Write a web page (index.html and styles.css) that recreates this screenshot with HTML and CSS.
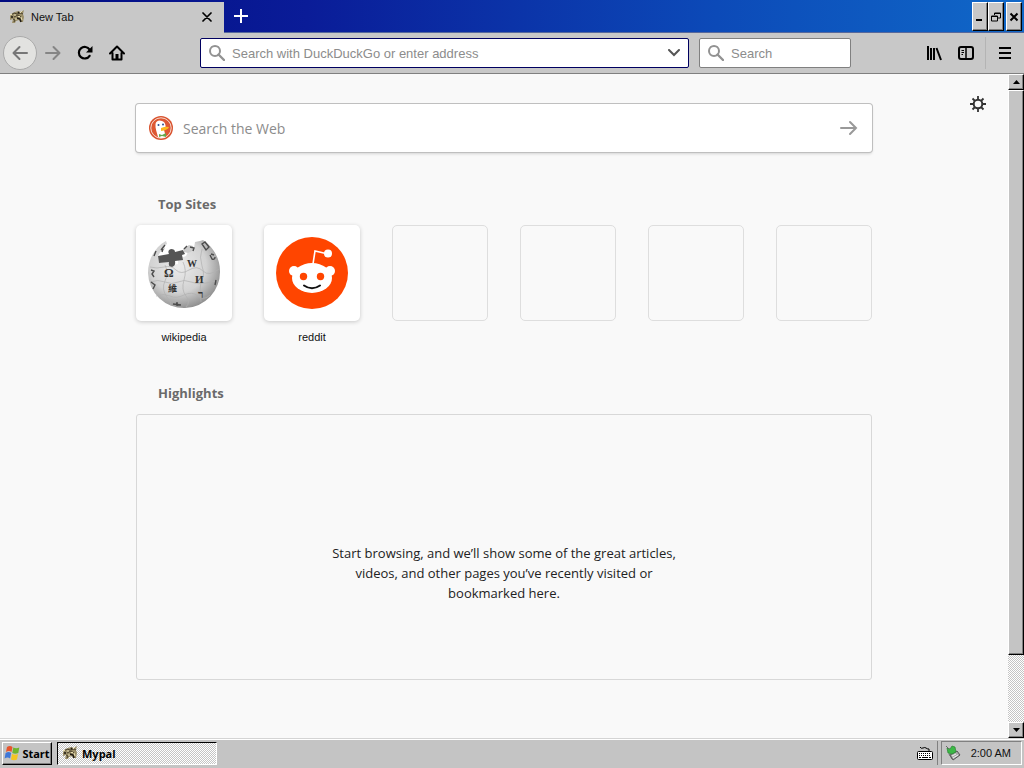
FILE: index.html
```html
<!DOCTYPE html>
<html lang="en">
<head>
    <meta charset="UTF-8">
    <meta name="viewport" content="width=device-width,initial-scale=1">
    <title>New Tab</title>
    <link rel="stylesheet" href="styles.css">
</head>
<body>
<svg class="defs" width="0" height="0" aria-hidden="true">
    <symbol id="mypal" viewBox="0 0 16 16">
        <path d="M1 7 3 4.500 6 3l3-1 3 1 3-2-1 4 1 3-1 5h-3l-1-2-3 1-1 2H3l1-4-3 1z" fill="#9a8e68"/>
        <path d="M2 6 5 4l3 1 4-1 2 1M5 8l4-2 3 2M4 10l2 1-1 2" fill="none" stroke="#4a412c" stroke-width="1"/>
        <path d="M8 9l3 1 1 3M2 8h2M9 3l1 1" fill="none" stroke="#1c1812" stroke-width="1.500"/>
        <path d="M1 5.500h2M5 6h2M11 4l2-2M9 7.500h2M6 10h2M12 8l1 3" stroke="#e6dcb0" stroke-width="1"/>
    </symbol>
    <symbol id="glass" viewBox="0 0 16 16">
        <circle cx="6" cy="6" r="5" fill="none" stroke="currentColor" stroke-width="2"/>
        <path d="M9.5 9.5 15 15" stroke="currentColor" stroke-width="2.4" stroke-linecap="round"/>
    </symbol>
    <symbol id="arrow" viewBox="0 0 16 16">
        <path d="M1 8h13M8.5 2l6 6-6 6" fill="none" stroke="currentColor" stroke-width="2" stroke-linecap="round" stroke-linejoin="round"/>
    </symbol>
</svg>

<header class="titlebar">
    <div class="tab">
        <svg class="icon16"><use href="#mypal"/></svg>
        <span class="tab-title">New Tab</span>
        <button class="tab-close" aria-label="Close tab">
            <svg width="10" height="10" viewBox="0 0 10 10"><path d="M1 1l8 8M9 1 1 9" stroke="#000" stroke-width="1.7" stroke-linecap="round"/></svg>
        </button>
    </div>
    <button class="new-tab" aria-label="New tab">
        <svg width="14" height="14" viewBox="0 0 14 14"><path d="M7 0v14M0 7h14" stroke="#fff" stroke-width="2"/></svg>
    </button>
    <div class="window-buttons">
        <button aria-label="Minimize"><svg width="10" height="10" viewBox="0 0 10 10"><path d="M1 8h6" stroke="#000" stroke-width="2"/></svg></button>
        <button aria-label="Restore"><svg width="10" height="10" viewBox="0 0 10 10"><path d="M3.5 3V1h6v5H7M3 1.5h7M.5 4h6v5h-6zM0 4.5h7" fill="none" stroke="#000"/></svg></button>
        <button class="close" aria-label="Close"><svg width="10" height="10" viewBox="0 0 10 10"><path d="M1.5 1.5l7 7M8.5 1.5l-7 7" stroke="#000" stroke-width="2"/></svg></button>
    </div>
</header>

<nav class="toolbar">
    <div class="nav-buttons">
        <button class="back" aria-label="Back"><svg class="icon16 flip"><use href="#arrow"/></svg></button>
        <button class="forward" aria-label="Forward"><svg class="icon16"><use href="#arrow"/></svg></button>
        <button aria-label="Reload">
            <svg class="icon16" viewBox="0 0 16 16"><path d="M12.6 10.8A5.8 5.8 0 1 1 12.6 4.6" fill="none" stroke="#000" stroke-width="2.2" stroke-linecap="round"/><path d="M15.5 1v6.5H9z"/></svg>
        </button>
        <button aria-label="Home">
            <svg class="icon16" viewBox="0 0 16 16"><path d="M1 8.5 8 1.5l7 7M3.5 8v6.5h9V8" fill="none" stroke="#000" stroke-width="2" stroke-linecap="round" stroke-linejoin="round"/><path d="M6.5 9h3v5.500h-3z"/></svg>
        </button>
    </div>
    <div class="field urlbar">
        <svg class="icon16"><use href="#glass"/></svg>
        <input type="text" aria-label="Address" placeholder="Search with DuckDuckGo or enter address">
        <button aria-label="Show history">
            <svg width="12" height="8" viewBox="0 0 12 8"><path d="M1 1l5 5 5-5" fill="none" stroke="#555" stroke-width="2" stroke-linecap="round"/></svg>
        </button>
    </div>
    <div class="field searchbar">
        <svg class="icon16"><use href="#glass"/></svg>
        <input type="text" aria-label="Search" placeholder="Search">
    </div>
    <div class="tool-buttons">
        <button aria-label="Library">
            <svg class="icon16" viewBox="0 0 16 16"><path d="M2 1v14M5 3v12M8 3v12M10.500 3l4.500 12" stroke="#000" stroke-width="2"/></svg>
        </button>
        <button aria-label="Sidebars">
            <svg class="icon16" viewBox="0 0 16 16"><rect x="1" y="2" width="14" height="12" rx="2" fill="none" stroke="#000" stroke-width="2"/><path d="M8 2v12" stroke="#000" stroke-width="1.500"/><path d="M3.500 5.500H6M3.500 7.500H6M3.500 9.500H5" stroke="#000"/></svg>
        </button>
        <button class="menu" aria-label="Open menu">
            <svg width="12" height="12" viewBox="0 0 12 12"><path d="M0 1h12M0 6h12M0 11h12" stroke="#000" stroke-width="2"/></svg>
        </button>
    </div>
</nav>

<div class="viewport">
    <main>
        <button class="settings" aria-label="Settings">
            <svg class="icon16" viewBox="0 0 16 16"><circle cx="8" cy="8" r="4.300" fill="none" stroke="#333" stroke-width="2"/><path d="M8 0v4M8 12v4M0 8h4M12 8h4M2.500 2.500 5 5M11 11l2.500 2.500M13.500 2.500 11 5M5 11l-2.500 2.500" stroke="#333" stroke-width="1.800"/></svg>
        </button>
        <div class="content">
            <form class="web-search">
                <svg width="24" height="24" viewBox="0 0 24 24">
                    <circle cx="12" cy="12" r="12" fill="#d9532f"/>
                    <circle cx="12" cy="12" r="10.200" fill="#de5833" stroke="#f6dcd2" stroke-width="1"/>
                    <path d="M9 21C8 17 6 12 6.500 8 7 5 10 3.500 13 5c3 1 4 4 3.500 7L15 14l2 7q-4 2-8 0z" fill="#fff"/>
                    <circle cx="9.500" cy="9" r="1" fill="#2d4f8e"/><circle cx="14" cy="8.500" r="1" fill="#2d4f8e"/>
                    <path d="M12 12q5-2 8-1-1 3-8 4z" fill="#fdb81e"/>
                    <path d="M10 18l3 1 4-2v4l-4-1-3 1z" fill="#65a94b"/>
                </svg>
                <input type="text" aria-label="Search the Web" placeholder="Search the Web">
                <button aria-label="Submit search"><svg width="18" height="16" viewBox="0 0 18 16"><path d="M1 8h15M10 2l6 6-6 6" fill="none" stroke="#999" stroke-width="2" stroke-linecap="round"/></svg></button>
            </form>

            <section>
                <h2>Top Sites</h2>
                <ul class="sites">
                    <li>
                        <a href="#">
                            <span class="tile">
                                <svg width="96" height="96" viewBox="0 0 96 96">
                                    <defs>
                                        <radialGradient id="globe" cx=".42" cy=".38" r=".65">
                                            <stop offset="0" stop-color="#ececec"/>
                                            <stop offset=".6" stop-color="#d2d2d2"/>
                                            <stop offset="1" stop-color="#8c8c8c"/>
                                        </radialGradient>
                                    </defs>
                                    <path d="M30 16l1 3-3 2 1 3-4 2-3 5 1 7 12-2 2 4 5-1 0-5 8-3 3-6 5-2 1-6 5-1 3-1 5 4C80 27 84 36 84 46a36 36 0 0 1-72 2C12 34 19 22 30 16z" fill="url(#globe)"/>
                                    <path d="M22 31l11-2q-2-4 2-5 4 0 4 3l8-2 2 4-3 1 1 5-8 1q1 5-3 6-4 0-3-5l-10 1z" fill="#555"/>
                                    <path d="M47 24l6-4 4 1 1 4-6 3-4-1z" fill="#ccc"/>
                                    <path d="M14 42q7 2 14 0t12 3 13 0 14 1 16-2M14 57q8-3 15 0t13 0 13 0 15 1 12-2M20 71q8-3 14 0t14-1 14 1 12-1M29 40q4 8 0 16t2 16 3 8M47 37q4 8 1 18t2 16 0 11M66 24q-3 8 0 17t0 14-1 22" fill="none" stroke="#b0b0b0" stroke-width=".7"/>
                                    <g class="globe-letters">
                                        <text x="28" y="52" font-size="12">Ω</text>
                                        <text x="51" y="42" font-size="10">W</text>
                                        <text x="59" y="58" font-size="11">И</text>
                                        <text x="32" y="67" font-size="9">維</text>
                                        <text x="62" y="73" font-size="11">ר</text>
                                    </g>
                                    <path d="M66 19l3-2 4 5-3 3zM74 30l2 4q3 1 3-2M75 29l3 1M48 24l3-3M54 22l4 1-1 3M18 31l2-5M25 25l4-5M26 27l1-3M15 45l3 1-2 3 2 3M15 57l4 3-2 4M37 79l8 1M41 77v4M80 55l-1 5" fill="none" stroke="#4c4c4c" stroke-width="1.400"/>
                                </svg>
                            </span>
                            wikipedia
                        </a>
                    </li>
                    <li>
                        <a href="#">
                            <span class="tile">
                                <svg width="96" height="96" viewBox="0 0 96 96">
                                    <circle cx="48" cy="48" r="36" fill="#ff4500"/>
                                    <path d="M49 39l2-13 13 3" fill="none" stroke="#fff" stroke-width="1.600"/>
                                    <g fill="#fff">
                                        <circle cx="64" cy="28.500" r="4"/>
                                        <circle cx="30" cy="46" r="5"/><circle cx="66" cy="46" r="5"/>
                                        <ellipse cx="48" cy="53" rx="20" ry="15"/>
                                    </g>
                                    <circle cx="39.500" cy="51.500" r="3.700" fill="#ff4500"/><circle cx="56.500" cy="51.500" r="3.700" fill="#ff4500"/>
                                    <path d="M40 60.500q8 5.500 16 0" fill="none" stroke="#111" stroke-width="2" stroke-linecap="round"/>
                                </svg>
                            </span>
                            reddit
                        </a>
                    </li>
                    <li><span class="tile empty"></span></li>
                    <li><span class="tile empty"></span></li>
                    <li><span class="tile empty"></span></li>
                    <li><span class="tile empty"></span></li>
                </ul>
            </section>

            <section>
                <h2>Highlights</h2>
                <div class="highlights">
                    <p>Start browsing, and we’ll show some of the great articles, videos, and other pages you’ve recently visited or bookmarked here.</p>
                </div>
            </section>
        </div>
    </main>
    <div class="scrollbar">
        <button class="raised" aria-label="Scroll up"><svg width="7" height="4" viewBox="0 0 7 4"><path d="M0 4h7L3.500 0z"/></svg></button>
        <div class="thumb raised"></div>
        <button class="raised" aria-label="Scroll down"><svg width="7" height="4" viewBox="0 0 7 4"><path d="M0 0h7L3.500 4z"/></svg></button>
    </div>
</div>

<footer class="taskbar">
    <button class="start raised">
        <svg class="icon16" viewBox="0 0 16 16">
            <path d="M3 2q3-2 5.500 0L7.500 7Q5 5 2 7z" fill="#e8542c"/>
            <path d="M9.300 2.500q3 1.500 6 0L14.300 8q-3 1.500-6 0z" fill="#6fb52c"/>
            <path d="M1.600 8q3-2 5.500 0l-1 5.500q-2.500-2-5.500 0z" fill="#3f78d8"/>
            <path d="M8 9q3 1.500 6 0l-1 5.500q-3 1.500-6 0z" fill="#f5c521"/>
        </svg>
        Start
    </button>
    <button class="task">
        <svg class="icon16"><use href="#mypal"/></svg>
        Mypal
    </button>
    <div class="language">
        <svg width="16" height="14" viewBox="0 0 16 14"><path d="M3 1q1 2 3 1t3 0 3 1v2" fill="none" stroke="#000"/><rect x=".5" y="5.500" width="15" height="8" rx="1" fill="#fff" stroke="#000"/><path d="M2 7.500h12M2 9.500h12" stroke="#000" stroke-dasharray="1 1"/><path d="M2 11.500h2M5 11.500h6M12 11.500h2" stroke="#000"/></svg>
    </div>
    <div class="tray">
        <svg class="icon16" viewBox="0 0 16 16"><path d="M5 10l7-4 3 4-7 5z" fill="#aaa" stroke="#555"/><path d="M7 11l4-2M8 13l5-3" stroke="#eee"/><path d="M2 3l3 1 2-3 3 1 1 5-4 2-4-1z" fill="#3cb846" stroke="#2b8433" stroke-width=".7"/><path d="M1 1l3 3M4 9l3 5" stroke="#666"/></svg>
        <time>2:00 AM</time>
    </div>
</footer>
</body>
</html>
```

FILE: styles.css
```css
* {
    margin: 0;
    padding: 0;
    box-sizing: border-box;
}

body {
    display: flex;
    flex-direction: column;
    height: 100vh;
    overflow: hidden;
    background: #c8c8c8;
    color: #111;
    font-family: "Liberation Sans", Arial, sans-serif;
    font-size: 11px;
}

button {
    display: flex;
    align-items: center;
    justify-content: center;
    border: none;
    background: none;
    color: inherit;
    font: inherit;
}

input {
    flex: 1;
    min-width: 0;
    border: none;
    outline: none;
    background: none;
    font: inherit;
}

input::placeholder {
    color: #8c8c8c;
    opacity: 1;
}

svg {
    display: block;
    flex: none;
}

.defs {
    position: absolute;
}

.icon16 {
    width: 16px;
    height: 16px;
}

.flip {
    transform: scaleX(-1);
}

.raised {
    background: #c4c4c4;
    border: 1px solid;
    border-color: #fff #000 #000 #fff;
    box-shadow: inset -1px -1px #808080;
}

/* window title and tabs */
.titlebar {
    display: flex;
    flex: none;
    height: 33px;
    padding-top: 2px;
    background: linear-gradient(90deg, #000a80, #0a1c98 30%, #0c4ab8 70%, #1068c8);
    border-bottom: 1px solid #56689c;
}

.tab {
    display: flex;
    align-items: center;
    width: 224px;
    height: 31px;
    padding: 0 8px 2px 9px;
    background: #c8c8c8;
}

.tab-title {
    flex: 1;
    margin-left: 6px;
}

.tab-close {
    width: 18px;
    height: 18px;
}

.new-tab {
    width: 34px;
    height: 28px;
}

.window-buttons {
    display: flex;
    height: 29px;
    margin-left: auto;
    padding-right: 2px;
}

.window-buttons button {
    width: 16px;
    background: #c8c8c8;
    border: 1px solid;
    border-color: #fff #000 #000 #fff;
    box-shadow: inset -1px -1px #808080;
}

.window-buttons .close {
    margin-left: 2px;
}

/* navigation */
.toolbar {
    display: flex;
    flex: none;
    align-items: center;
    height: 41px;
    padding-left: 3px;
    border-bottom: 1px solid #808080;
}

.nav-buttons {
    display: flex;
    align-items: center;
    width: 197px;
}

.nav-buttons button {
    width: 32px;
    height: 32px;
}

.nav-buttons .back {
    width: 34px;
    height: 34px;
    background: #e2e2e0;
    border: 1px solid #aaa;
    border-radius: 50%;
    color: #777;
}

.nav-buttons .forward {
    color: #858585;
}

.field {
    display: flex;
    align-items: center;
    height: 30px;
    padding: 0 8px;
    background: #fff;
    border: 1px solid #808080;
    border-radius: 2px;
    color: #929292;
    font-size: 13px;
}

.field input {
    margin-left: 7px;
}

.urlbar {
    flex: 1;
    border-color: #000060;
}

.searchbar {
    width: 152px;
    margin-left: 10px;
}

.tool-buttons {
    display: flex;
    margin-left: 67px;
}

.tool-buttons button {
    width: 32px;
    height: 32px;
}

.tool-buttons .menu {
    width: 39px;
    margin-left: 3px;
    border-left: 1px solid #b4b4b4;
}

/* new tab page */
.viewport {
    display: flex;
    flex: 1;
    min-height: 0;
}

main {
    position: relative;
    flex: 1;
    padding-top: 30px;
    background: #f9f9f9;
}

.settings {
    position: absolute;
    top: 22px;
    right: 22px;
}

.content {
    width: 736px;
    max-width: 100%;
    margin: 0 auto;
}

.web-search {
    display: flex;
    align-items: center;
    height: 48px;
    margin-bottom: 42px;
    padding: 0 14px 0 13px;
    background: #fff;
    border-radius: 3px;
    box-shadow: 0 0 0 1px #bfbfbf, 0 2px 3px rgba(0, 0, 0, .15);
}

.web-search input {
    margin-left: 10px;
    font-family: "Open Sans", sans-serif;
    font-size: 14px;
}

h2 {
    height: 20px;
    margin: 0 22px 11px;
    color: #6a6a6a;
    font: bold 13px/20px "Open Sans", sans-serif;
}

.sites {
    display: grid;
    grid-template-columns: repeat(6, 96px);
    justify-content: space-between;
    margin-bottom: 38px;
    list-style: none;
}

.sites a {
    display: block;
    color: #111;
    line-height: 16px;
    text-align: center;
    text-decoration: none;
}

.tile {
    display: block;
    height: 96px;
    margin-bottom: 8px;
    background: #fff;
    border-radius: 5px;
    box-shadow: 0 1px 4px rgba(0, 0, 0, .2);
}

.empty {
    background: none;
    border: 1px solid #dedede;
    box-shadow: none;
}

.highlights {
    display: flex;
    align-items: center;
    justify-content: center;
    min-height: 266px;
    padding-top: 52px;
    border: 1px solid #d8d8d8;
    border-radius: 3px;
}

.highlights p {
    width: 354px;
    color: #222;
    font: 13px/20px "Open Sans", sans-serif;
    text-align: center;
}

.globe-letters {
    fill: #333;
    font-family: "Liberation Serif", "DejaVu Sans", "Noto Sans CJK TC", serif;
    font-weight: bold;
}

.scrollbar {
    display: flex;
    flex-direction: column;
    width: 16px;
    background: repeating-conic-gradient(#fff 0 25%, #c4c4c4 0 50%) 0 0 / 2px 2px;
}

.scrollbar button {
    height: 16px;
}

.thumb {
    height: 565px;
    margin-bottom: auto;
}

/* taskbar */
.taskbar {
    display: flex;
    flex: none;
    align-items: center;
    height: 30px;
    padding: 0 2px 1px;
    background: #c4c4c4;
    border-top: 1px solid #d4d4d4;
    box-shadow: inset 0 1px #fff;
}

.start,
.task {
    height: 23px;
    color: #000;
    font: bold 11px "Open Sans", sans-serif;
}

.start {
    width: 50px;
    gap: 2px;
}

.task {
    justify-content: flex-start;
    width: 160px;
    margin-left: 5px;
    padding-left: 4px;
    gap: 4px;
    background: repeating-conic-gradient(#fff 0 25%, #c4c4c4 0 50%) 0 0 / 2px 2px;
    border: 1px solid;
    border-color: #000 #fff #fff #000;
}

.language {
    display: flex;
    align-items: center;
    height: 24px;
    margin-left: auto;
    padding-right: 4px;
    border-right: 1px solid #808080;
}

.tray {
    display: flex;
    align-items: center;
    gap: 10px;
    height: 24px;
    margin-left: 3px;
    padding: 0 10px 0 3px;
    border: 1px solid;
    border-color: #808080 #fff #fff #808080;
}
```
